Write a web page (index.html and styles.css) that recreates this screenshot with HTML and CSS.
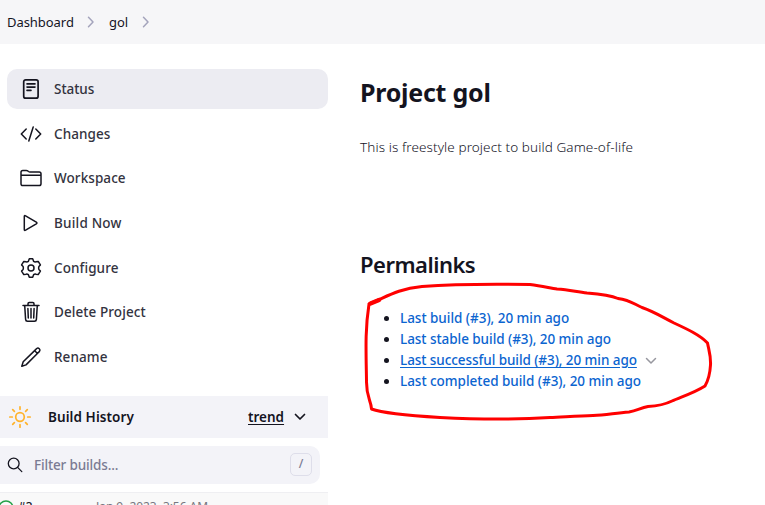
FILE: index.html
```html
<!DOCTYPE html>
<html lang="en">
<head>
<meta charset="utf-8">
<title>gol [Jenkins]</title>
<link rel="stylesheet" href="styles.css">
</head>
<body>
<nav class="breadcrumbs">
  <a class="crumb-home">Dashboard</a>
  <svg class="crumb-arrow" width="8" height="12" viewBox="0 0 8 12"><path d="M1.5 1.2 6 6 1.5 10.8"/></svg>
  <a class="crumb-job">gol</a>
  <svg class="crumb-arrow" width="8" height="12" viewBox="0 0 8 12"><path d="M1.5 1.2 6 6 1.5 10.8"/></svg>
</nav>
<div class="page">
  <aside class="side">
    <div class="tasks">
      <a class="task active"><svg class="icon" viewBox="0 0 24 24"><rect x="4.7" y="2.8" width="14.4" height="18.4" rx="2" stroke-width="1.7"/><path d="M8 6.9h8M8 10.1h8M8 13.4h4" stroke-width="1.6"/></svg><span class="t-status">Status</span></a>
      <a class="task"><svg class="icon" viewBox="0 0 24 24"><path d="M7.2 7 2.3 12l4.9 5M16.8 7l4.9 5-4.9 5M14.2 5 9.8 19"/></svg><span class="t-changes">Changes</span></a>
      <a class="task"><svg class="icon" viewBox="0 0 24 24"><path d="M2 9V6.2Q2 4.4 3.8 4.4h3.5q.8 0 1.4.5l.8.6q.6.4 1.4.4h9.3Q22 5.900 22 7.700V9M2 9.200h20v8.600q0 1.800-1.800 1.800H3.800Q2 19.600 2 17.800z"/></svg><span class="t-workspace">Workspace</span></a>
      <a class="task"><svg class="icon" viewBox="0 0 24 24"><path d="M5.300 5.500v13q0 1.400 1.300.700l10.700-6.300q1.300-.9 0-1.800L6.600 4.800q-1.300-.7-1.300.7z"/></svg><span class="t-build">Build Now</span></a>
      <a class="task"><svg class="icon" viewBox="0 0 24 24"><circle cx="12" cy="12" r="3"/><path d="M10.300 2.800h3.400l.9 2.500q1.100.8 2.400.5l2.200-.4 2.200 3.500-1.500 1.700q-.6 1.400 0 2.800l1.500 1.700-2.200 3.500-2.200-.4q-1.300-.3-2.400.5l-.9 2.500h-3.400l-.9-2.500q-1.100-.8-2.400-.5l-2.200.4-2.200-3.500 1.500-1.700q.6-1.400 0-2.800L2.600 8.900l2.200-3.500 2.200.4q1.300.3 2.400-.5z"/></svg><span class="t-configure">Configure</span></a>
      <a class="task"><svg class="icon" viewBox="0 0 24 24"><path d="M4 5.400h16M5.700 5.400l.9 14q.1 1.800 1.900 1.800h7q1.800 0 1.900-1.800l.9-14M9 5.200V3.800q0-1.200 1.200-1.200h3.600q1.200 0 1.200 1.200v1.400M12 8.500v9.500M8.900 8.500l.4 9.500M15.100 8.500l-.4 9.500"/></svg><span class="t-delete">Delete Project</span></a>
      <a class="task"><svg class="icon" viewBox="0 0 24 24"><path d="m15.600 5.600 2.100-2.100q1.300-1 2.600.2 1.300 1.300.2 2.700l-2.100 2.100L7 19.900l-4.200 1.400 1.400-4.500zM15.600 5.600l2.800 2.900"/></svg><span class="t-rename">Rename</span></a>
    </div>
    <div class="history">
      <svg class="sun" viewBox="0 0 24 24"><circle cx="12" cy="12" r="4.300"/><path d="M12 1.800v2.500M12 19.700v2.500M1.800 12h2.500M19.700 12h2.500M4.700 4.700l1.700 1.700M17.600 17.600l1.700 1.700M4.700 19.300l1.700-1.700M17.600 6.400l1.700-1.700"/></svg>
      <span class="history-title">Build History</span>
      <a class="trend">trend</a>
      <svg class="chevron" width="12" height="8" viewBox="0 0 12 8"><path d="m1.500 1.500 4.500 4.500 4.500-4.500"/></svg>
    </div>
    <div class="filter">
      <svg class="search" viewBox="0 0 16 16"><circle cx="6.700" cy="6.500" r="5.400"/><path d="m10.600 10.400 4.200 4.200"/></svg>
      <span class="placeholder">Filter builds...</span>
      <kbd class="key">/</kbd>
    </div>
    <div class="build-row">
      <svg class="ok" viewBox="0 0 16 16"><circle cx="8" cy="8" r="7"/></svg>
      <span class="build-no">#3</span>
      <span class="build-date">Jan 9, 2023, 3:56 AM</span>
    </div>
  </aside>
  <main class="main">
    <h1>Project gol</h1>
    <p class="description">This is freestyle project to build Game-of-life</p>
    <h2>Permalinks</h2>
    <ul class="links">
      <li><a class="l1">Last build (#3), 20 min ago</a></li>
      <li><a class="l2">Last stable build (#3), 20 min ago</a></li>
      <li><a class="l3">Last successful build (#3), 20 min ago</a><svg class="menu-arrow" width="12" height="8" viewBox="0 0 12 8"><path d="m1.500 1.500 4.500 4.500 4.500-4.500"/></svg></li>
      <li><a class="l4">Last completed build (#3), 20 min ago</a></li>
    </ul>
  </main>
</div>
<svg class="markup" width="765" height="505" viewBox="0 0 765 505">
  <path d="M369 304C385 298 396 289 422 286.500C455 284 500 284 530 284.500C542 286 550 288 557 289C570 290 577 292 587 293C600 294 610 295 618 298.500C630 300 634 304 642 307.500C655 312 664 318 674 323C687 329 700 335 707.500 343C709 351 711 356 710.500 365C710 374 709 379 705 386C694 393 681 397 672 401C664 405 658 406 648 406.500C640 408 637 411 629 412C615 413 606 415 593 415.500C578 416 562 417 550 417.500C510 420 470 419 440 417.500C415 416 385 414 371.500 409C371 400 366 397 366.500 380C366 350 365 330 369 304"/>
  <path class="blob" d="M370.500 303.500 379 300"/>
</svg>
</body>
</html>
```
FILE: styles.css
```css
* { box-sizing: border-box; }
body {
  margin: 0;
  height: 505px;
  overflow: hidden;
  background: #fff;
  color: #14141f;
  font: 500 13.500px/20px "Noto Sans", "Open Sans", sans-serif;
  white-space: nowrap;
}
svg { fill: none; stroke: currentColor; stroke-width: 1.500; stroke-linecap: round; stroke-linejoin: round; flex: none; }
.breadcrumbs { display: flex; align-items: center; height: 44px; padding-left: 7px; background: #f6f6f8; font-size: 13px; font-weight: 400; }
.crumb-home { width: 80px; letter-spacing: -.05px; }
.crumb-job { width: 33px; margin-left: 14px; }
.crumb-arrow { color: #a4a4bc; }
.page { display: flex; height: 461px; }
.side { width: 328px; flex: none; padding-top: 25px; }
.tasks { display: grid; grid-auto-rows: 40px; row-gap: 4.670px; padding-left: 7px; }
.task { display: flex; align-items: center; padding-left: 12px; gap: 11px; border-radius: 10px; letter-spacing: .08px; color: #333340; }
.active { background: #ececf2; }
.t-status { letter-spacing: -.05px; }
.t-build { letter-spacing: .2px; }
.icon { width: 24px; height: 24px; color: #14141f; }
.history { display: flex; align-items: center; height: 42px; margin-top: 19px; padding-left: 8px; background: #f3f3f8; font-weight: 600; }
.sun { width: 24px; height: 24px; color: #ffb32c; stroke-width: 1.700; }
.history-title { width: 200px; margin-left: 16px; letter-spacing: .08px; }
.trend { width: 46px; text-decoration: underline; text-underline-offset: 2px; }
.chevron { stroke-width: 1.700; }
.filter { display: flex; align-items: center; width: 320px; height: 38px; margin-top: 8px; padding-left: 7px; border-radius: 0 10px 10px 0; background: #f3f3f8; }
.search { width: 16px; height: 16px; stroke-width: 1.300; }
.placeholder { width: 256px; margin-left: 11px; color: #7b7b93; letter-spacing: -.15px; }
.key { width: 22px; height: 23px; border: 1px solid #dedeea; border-radius: 5px; font: 500 12px/20px "Noto Sans", sans-serif; text-align: center; color: #7b7b93; }
.build-row { display: flex; height: 21px; margin-top: 8px; padding-top: 4px; border-top: 1px solid #efeff2; background: #f9f9f9; overflow: hidden; font-size: 12px; }
.ok { width: 16px; height: 16px; margin: 3px 0 0 -2px; color: #24a148; }
.build-no { width: 78px; margin-left: 4px; }
.build-date { color: #77777f; font-weight: 400; letter-spacing: -.05px; }
.main { margin-left: 32px; }
h1 { margin: 31px 0 0; font-size: 25px; line-height: 34px; font-weight: 700; letter-spacing: -.25px; }
.description { margin: 28px 0 0; font-size: 13.500px; font-weight: 350; letter-spacing: .1px; }
h2 { margin: 92px 0 0; font-size: 22px; line-height: 30px; font-weight: 600; letter-spacing: -.5px; }
.links { margin: 29px 0 0; padding-left: 40px; line-height: 21px; }
.links li { height: 21px; }
.links a { color: #0b64d0; letter-spacing: -.05px; }
.links .l1, .links .l4 { letter-spacing: -.03px; }
.links .l3 { text-decoration: underline; text-underline-offset: 2px; letter-spacing: -.07px; }
.menu-arrow { margin-left: 8px; color: #97979f; }
.markup { position: absolute; left: 0; top: 0; color: #f00; stroke-width: 3; pointer-events: none; }
.blob { stroke-width: 4.500; }
```
